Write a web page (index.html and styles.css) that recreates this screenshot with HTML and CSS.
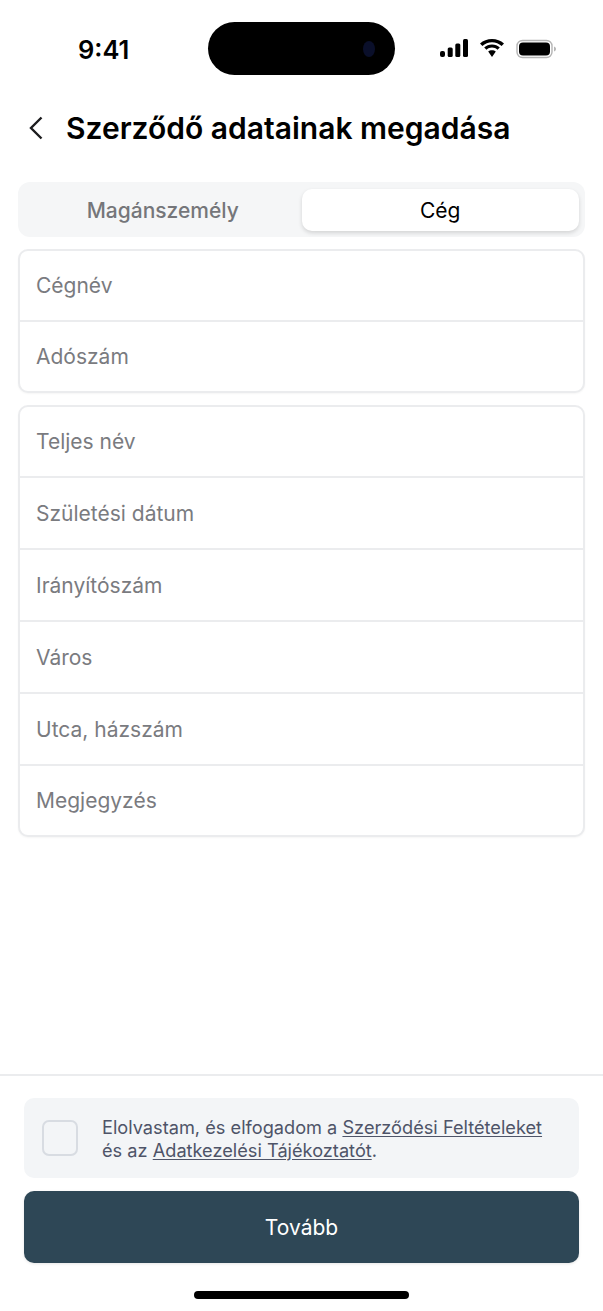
FILE: index.html
```html
<!DOCTYPE html>
<html lang="hu">
<head>
    <title>Szerződő adatainak megadása</title>
    <link rel="stylesheet" href="styles.css">
</head>
<body>
    <div class="screen">
        <div class="status-bar">
            <span class="time">9:41</span>
            <div class="island"><span class="camera"></span></div>
            <div class="status-icons">
                <svg width="28" height="18" viewBox="0 0 28 18"><rect x="0" y="12" width="5" height="6" rx="2" fill="#000"/><rect x="7.700" y="8.500" width="5" height="9.500" rx="1.500" fill="#000"/><rect x="15.300" y="4.500" width="5" height="13.500" rx="1.500" fill="#000"/><rect x="23" y="0" width="5" height="18" rx="1.500" fill="#000"/></svg>
                <svg width="26" height="18" viewBox="0 0 26 18"><path d="M13 3.200c3.700 0 7 1.400 9.600 3.700L25 4.500C21.800 1.700 17.600 0 13 0S4.200 1.700 1 4.500l2.400 2.400C6 4.600 9.300 3.200 13 3.200z" fill="#000"/><path d="M13 8.600c2.100 0 4 .8 5.500 2.100l2.300-2.300C18.700 6.500 16 5.400 13 5.400s-5.700 1.100-7.800 3l2.300 2.300c1.500-1.300 3.400-2.100 5.500-2.100z" fill="#000"/><path d="M13 11.200c-1.500 0-2.800.5-3.800 1.400L13 18l3.800-5.400c-1-.9-2.300-1.400-3.800-1.400z" fill="#000"/></svg>
                <svg width="41" height="20" viewBox="0 0 41 20"><rect x="1" y="1.500" width="35" height="17" rx="5.500" fill="none" stroke="#b5b5b5" stroke-width="1.400"/><rect x="3" y="3.500" width="31" height="13" rx="4" fill="#000"/><path d="M38 7.500c1.400.4 2 1.300 2 2.500s-.6 2.100-2 2.500z" fill="#b5b5b5"/></svg>
            </div>
        </div>

        <div class="header">
            <svg class="back" width="16" height="24" viewBox="0 0 16 24"><path d="M13.500 1.500 3 12l10.500 10.500" fill="none" stroke="#1c1c1e" stroke-width="2.400"/></svg>
            <h1>Szerződő adatainak megadása</h1>
        </div>

        <div class="main">
            <div class="tabs">
                <div class="tab">Magánszemély</div>
                <div class="tab tab-active">Cég</div>
            </div>

            <div class="card">
                <div class="field">Cégnév</div>
                <div class="field">Adószám</div>
            </div>

            <div class="card">
                <div class="field">Teljes név</div>
                <div class="field">Születési dátum</div>
                <div class="field">Irányítószám</div>
                <div class="field">Város</div>
                <div class="field">Utca, házszám</div>
                <div class="field">Megjegyzés</div>
            </div>
        </div>

        <div class="footer">
            <div class="consent">
                <span class="checkbox"></span>
                <p>Elolvastam, és elfogadom a <a href="#">Szerződési Feltételeket</a><br>és az <a href="#">Adatkezelési Tájékoztatót</a>.</p>
            </div>
            <button class="next" type="button">Tovább</button>
            <div class="home-bar"></div>
        </div>
    </div>
</body>
</html>
```

FILE: styles.css
```css
* {
    box-sizing: border-box;
}

body {
    margin: 0;
    background-color: #fff;
    font-family: Inter, "Liberation Sans", sans-serif;
}

.screen {
    width: 603px;
    height: 1311px;
    display: flex;
    flex-direction: column;
    overflow: hidden;
}

.status-bar {
    height: 97px;
    padding: 22px 46px 0 78px;
    display: flex;
    align-items: flex-start;
}

.time {
    width: 130px;
    margin-top: 12px;
    font-size: 25.500px;
    line-height: 32px;
    font-weight: 600;
    color: #000;
}

.island {
    width: 187px;
    height: 53px;
    border-radius: 27px;
    background-color: #000;
    display: flex;
    align-items: center;
    justify-content: flex-end;
    padding-right: 20px;
}

.camera {
    width: 12px;
    height: 16px;
    border-radius: 50%;
    background-color: #0a0f2a;
}

.status-icons {
    margin-left: auto;
    margin-top: 17px;
    display: flex;
    align-items: flex-start;
    gap: 11px;
}

.status-icons svg {
    display: block;
}

.header {
    height: 64px;
    padding-left: 28px;
    padding-bottom: 2px;
    display: flex;
    align-items: center;
    gap: 22px;
}

.back {
    flex-shrink: 0;
}

h1 {
    margin: 0;
    font-size: 30px;
    line-height: 36px;
    font-weight: 600;
    color: #000;
}

.main {
    flex: 1;
    padding: 21px 18px 0;
    display: flex;
    flex-direction: column;
    gap: 12px;
}

.tabs {
    height: 55px;
    padding: 7px 6px 6px;
    border-radius: 12px;
    background-color: #f5f6f7;
    display: flex;
}

.tab {
    flex: 1;
    display: flex;
    align-items: center;
    justify-content: center;
    font-size: 21px;
    font-weight: 450;
    color: #75767a;
}

.tab-active {
    border-radius: 10px;
    background-color: #fff;
    box-shadow: 0 2px 4px rgba(0, 0, 0, 0.14);
    font-weight: 400;
    color: #000;
}

.card {
    border: 2px solid #ebecee;
    border-radius: 10px;
    background-color: #fff;
    box-shadow: 0 1px 2px rgba(0, 0, 0, 0.04);
}

.field {
    height: 72px;
    padding-left: 16px;
    display: flex;
    align-items: center;
    border-bottom: 2px solid #ebecee;
    font-size: 21px;
    color: #7a7b7f;
}

.field:first-child {
    height: 71px;
}

.field:last-child {
    height: 69px;
    border-bottom: none;
}

.footer {
    height: 237px;
    padding: 22px 24px 0;
    border-top: 2px solid #ebecee;
    display: flex;
    flex-direction: column;
}

.consent {
    height: 80px;
    padding: 0 24px 0 18px;
    border-radius: 10px;
    background-color: #f3f5f7;
    display: flex;
    align-items: center;
    gap: 24px;
}

.checkbox {
    width: 36px;
    height: 36px;
    flex-shrink: 0;
    border: 2px solid #d8dce2;
    border-radius: 7px;
}

.consent p {
    margin: 0;
    padding-top: 2px;
    font-size: 18.200px;
    line-height: 23px;
    color: #4e5468;
}

.consent a {
    color: #4e5468;
    text-decoration: underline;
    text-underline-offset: 2px;
}

.next {
    height: 72px;
    margin-top: 13px;
    border: none;
    border-radius: 10px;
    background-color: #2e4756;
    box-shadow: 0 1px 3px rgba(0, 0, 0, 0.1);
    font-family: inherit;
    font-size: 21px;
    font-weight: 400;
    color: #fff;
}

.home-bar {
    width: 215px;
    height: 8px;
    margin: 28px auto 0;
    border-radius: 4px;
    background-color: #000;
}
```
